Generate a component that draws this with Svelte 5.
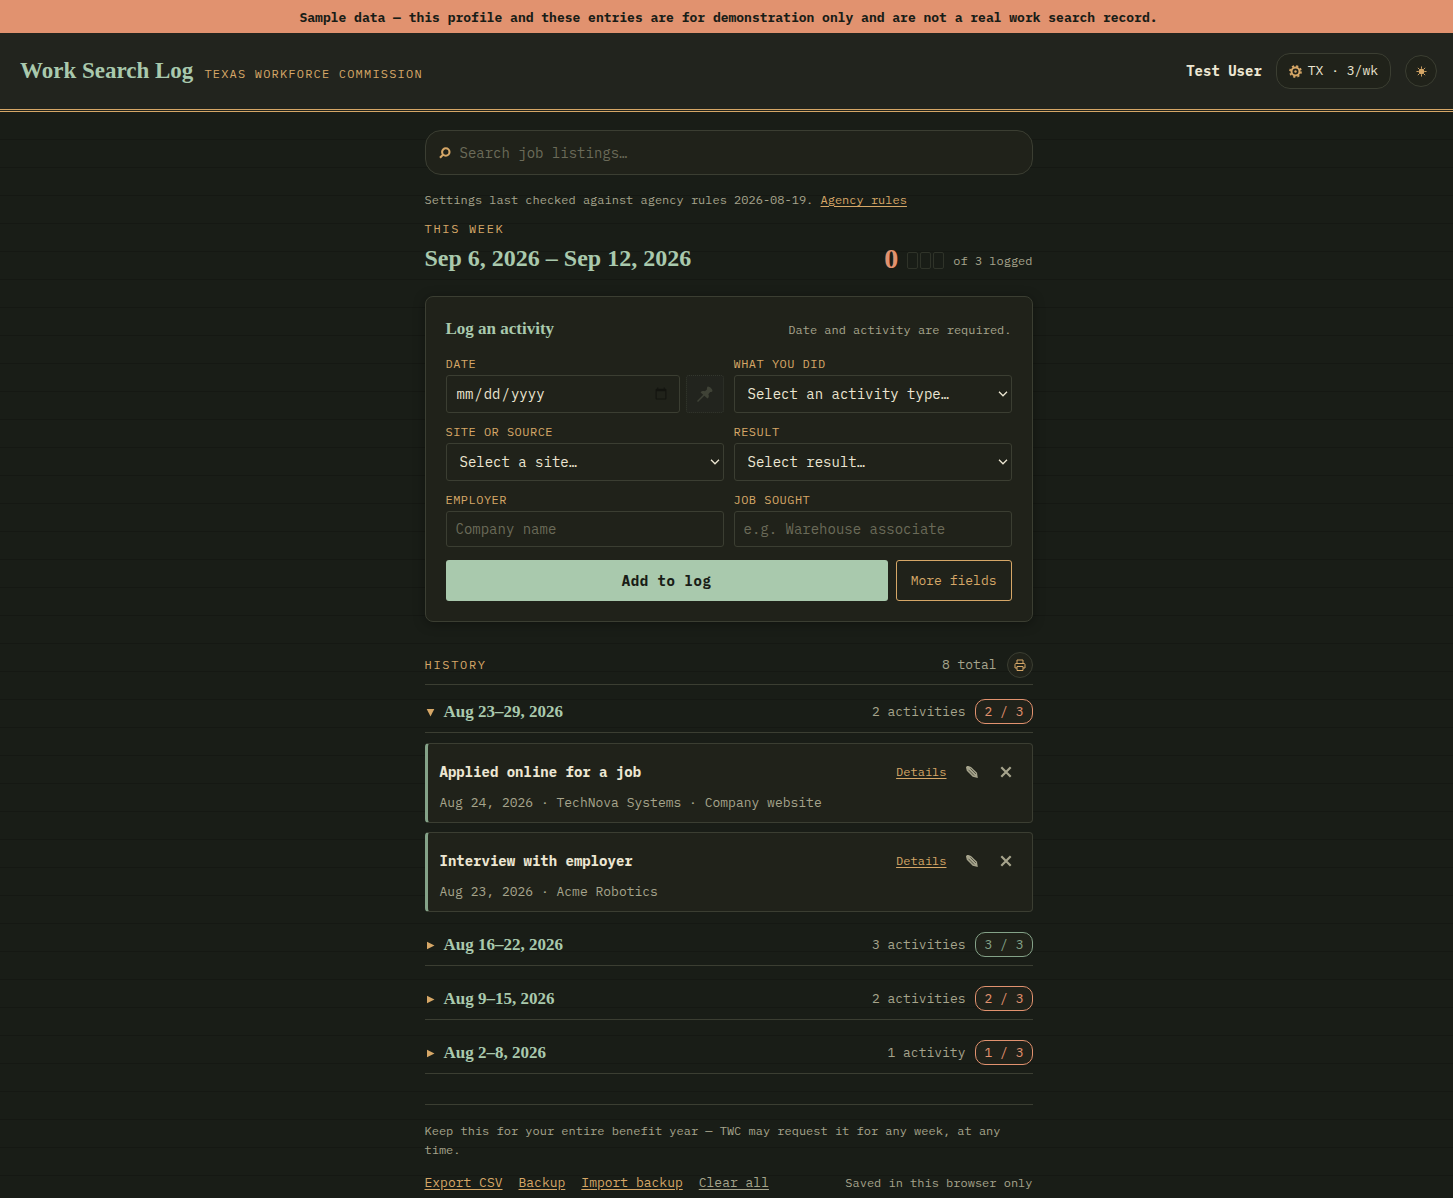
<script lang="ts">
    interface Entry {
        title: string;
        meta: string;
    }

    interface Week {
        label: string;
        count: number;
        entries: Entry[];
    }

    const goal = 3;

    const weeks: Week[] = [
        {
            label: 'Aug 23–29, 2026',
            count: 2,
            entries: [
                {
                    title: 'Applied online for a job',
                    meta: 'Aug 24, 2026 · TechNova Systems · Company website',
                },
                {
                    title: 'Interview with employer',
                    meta: 'Aug 23, 2026 · Acme Robotics',
                },
            ],
        },
        { label: 'Aug 16–22, 2026', count: 3, entries: [] },
        { label: 'Aug 9–15, 2026', count: 2, entries: [] },
        { label: 'Aug 2–8, 2026', count: 1, entries: [] },
    ];

    const total = weeks.reduce((sum, week) => sum + week.count, 0);

    let openWeek = $state('Aug 23–29, 2026');

    function toggleWeek(label: string) {
        openWeek = openWeek === label ? '' : label;
    }
</script>

<div class="page">
    <div class="banner">
        Sample data — this profile and these entries are for demonstration only
        and are not a real work search record.
    </div>

    <header class="topbar">
        <div class="brand">
            <h1>Work Search Log</h1>
            <span class="agency">Texas Workforce Commission</span>
        </div>
        <div class="account">
            <span class="user">Test User</span>
            <button class="state-pill" type="button">
                <svg width="13" height="13" viewBox="0 0 26 26" aria-hidden="true">
                    <circle cx="13" cy="13" r="8" fill="none" stroke="currentColor" stroke-width="4" />
                    <circle cx="13" cy="13" r="11" fill="none" stroke="currentColor" stroke-width="3.4" stroke-dasharray="4.32 4.32" />
                    <circle cx="13" cy="13" r="2.4" fill="currentColor" />
                </svg>
                TX · 3/wk
            </button>
            <button class="theme" type="button" aria-label="Switch theme">
                <svg width="11" height="11" viewBox="0 0 24 24" aria-hidden="true">
                    <circle cx="12" cy="12" r="6" fill="currentColor" />
                    <path
                        d="M12 1v5M12 18v5M1 12h5M18 12h5M4 4l4 4M16 16l4 4M4 20l4-4M16 8l4-4"
                        stroke="currentColor"
                        stroke-width="2"
                    />
                </svg>
            </button>
        </div>
    </header>

    <main>
        <label class="search">
            <svg width="12" height="12" viewBox="0 0 12 12" aria-hidden="true">
                <circle cx="6.8" cy="5" r="3.7" fill="none" stroke="currentColor" stroke-width="2.1" />
                <path d="M4.2 7.6L1 10.8" stroke="currentColor" stroke-width="2.1" />
            </svg>
            <input type="search" placeholder="Search job listings…" aria-label="Search job listings" />
        </label>

        <p class="checked">
            Settings last checked against agency rules 2026-08-19.
            <a href="#rules">Agency rules</a>
        </p>

        <section class="current">
            <div>
                <p class="eyebrow">This week</p>
                <h2>Sep 6, 2026 – Sep 12, 2026</h2>
            </div>
            <div class="tally">
                <span class="logged">0</span>
                <span class="boxes">
                    {#each { length: goal } as _}
                        <span class="box"></span>
                    {/each}
                </span>
                <span>of {goal} logged</span>
            </div>
        </section>

        <form class="card">
            <div class="card-head">
                <h3>Log an activity</h3>
                <span>Date and activity are required.</span>
            </div>

            <div class="fields">
                <div class="field">
                    <label for="date">Date</label>
                    <div class="date-row">
                        <input id="date" type="date" />
                        <button class="pin" type="button" aria-label="Pin this date" disabled>
                            <svg width="18" height="18" viewBox="0 0 18 18" aria-hidden="true">
                                <path
                                    d="M11.5 1.8c1.2-1.2 5.700 2.800 4.900 4.500-.6 1-1.500.5-2.200.8l-1.800 2.100c.8 1.700.5 3.400-.9 4.200L4.600 7.500C5.400 6.100 7.300 5.700 8.900 6.300l2-1.900c.1-.9-.2-1.700.6-2.600z"
                                    fill="currentColor"
                                />
                                <path d="M8.500 9.500L1.500 16.500" stroke="currentColor" stroke-width="1.5" />
                            </svg>
                        </button>
                    </div>
                </div>
                <div class="field">
                    <label for="activity">What you did</label>
                    <select id="activity">
                        <option>Select an activity type…</option>
                        <option>Applied online for a job</option>
                        <option>Interview with employer</option>
                    </select>
                </div>
                <div class="field">
                    <label for="site">Site or source</label>
                    <select id="site">
                        <option>Select a site…</option>
                        <option>Company website</option>
                    </select>
                </div>
                <div class="field">
                    <label for="result">Result</label>
                    <select id="result">
                        <option>Select result…</option>
                    </select>
                </div>
                <div class="field">
                    <label for="employer">Employer</label>
                    <input id="employer" type="text" placeholder="Company name" />
                </div>
                <div class="field">
                    <label for="job">Job sought</label>
                    <input id="job" type="text" placeholder="e.g. Warehouse associate" />
                </div>
            </div>

            <div class="actions">
                <button class="add" type="button">Add to log</button>
                <button class="more" type="button">More fields</button>
            </div>
        </form>

        <section>
            <div class="history-head">
                <h2 class="eyebrow">History</h2>
                <div class="history-tools">
                    <span>{total} total</span>
                    <button class="print" type="button" aria-label="Print history">
                        <svg width="12" height="12" viewBox="0 0 12 12" fill="none" stroke="currentColor" aria-hidden="true">
                            <path d="M3 4.500V1h6v3.500M3 9H1V5.500a1 1 0 0 1 1-1h8a1 1 0 0 1 1 1V9H9" />
                            <path d="M3 7.500h6V11.500H3z" />
                        </svg>
                    </button>
                </div>
            </div>

            <div class="weeks">
                {#each weeks as week (week.label)}
                    <div class="week">
                        <button
                            class="week-head"
                            type="button"
                            aria-expanded={openWeek === week.label}
                            onclick={() => toggleWeek(week.label)}
                        >
                            <svg
                                class="caret"
                                class:open={openWeek === week.label}
                                width="9"
                                height="9"
                                viewBox="0 0 9 9"
                                aria-hidden="true"
                            >
                                <path d="M1 .7L8.500 4.500L1 8.300z" fill="currentColor" />
                            </svg>
                            <span class="week-label">{week.label}</span>
                            <span class="week-count"
                                >{week.count}
                                {week.count === 1 ? 'activity' : 'activities'}</span
                            >
                            <span class="score" class:met={week.count >= goal}
                                >{week.count} / {goal}</span
                            >
                        </button>
                        {#if openWeek === week.label && week.entries.length}
                            <ul class="entries">
                                {#each week.entries as entry (entry.title)}
                                    <li class="entry">
                                        <div class="entry-head">
                                            <h4>{entry.title}</h4>
                                            <a href="#details">Details</a>
                                            <button type="button" aria-label="Edit entry">
                                                <svg width="14" height="14" viewBox="0 0 14 14" aria-hidden="true">
                                                    <path d="M1 2.600C1 1.500 2.200.8 3.400 1.100L6 2L12 7.800L12.800 13L7.700 11.800L1.800 5.800z" fill="currentColor" />
                                                    <path d="M3.500 4.800L9.200 10.600M5.400 3.400L11 9" stroke="#20221a" stroke-width="0.6" />
                                                </svg>
                                            </button>
                                            <button type="button" aria-label="Delete entry">
                                                <svg width="12" height="12" viewBox="0 0 12 12" aria-hidden="true">
                                                    <path d="M1.300 1.300L10.700 10.700M10.700 1.300L1.300 10.700" stroke="currentColor" stroke-width="2.200" />
                                                </svg>
                                            </button>
                                        </div>
                                        <p>{entry.meta}</p>
                                    </li>
                                {/each}
                            </ul>
                        {/if}
                    </div>
                {/each}
            </div>
        </section>

        <footer>
            <p>
                Keep this for your entire benefit year — TWC may request it for
                any week, at any time.
            </p>
            <div class="footer-row">
                <nav>
                    <a href="#export">Export CSV</a>
                    <a href="#backup">Backup</a>
                    <a href="#import">Import backup</a>
                    <a class="quiet" href="#clear">Clear all</a>
                </nav>
                <span>Saved in this browser only</span>
            </div>
        </footer>
    </main>
</div>

<style>
    :global(body) {
        margin: 0;
        background: #191d17;
    }

    .page {
        --paper: #191d17;
        --panel: #20221a;
        --bar: #22241e;
        --line: #3b3e32;
        --ink: #ece6d2;
        --muted: #a6a48c;
        --faint: #6b6b59;
        --green: #a9c9ad;
        --tan: #d6a767;
        --orange: #e1926f;
        --serif: 'Liberation Serif', serif;

        box-sizing: border-box;
        min-height: 100vh;
        color: var(--ink);
        font-family: 'IBM Plex Mono', 'Liberation Mono', monospace;
        font-size: 14px;
        line-height: 20px;
        background: repeating-linear-gradient(
            var(--paper) 0,
            var(--paper) 27px,
            #151813 27px,
            #151813 28px
        );
    }

    .page :is(input, select, button) {
        box-sizing: border-box;
        margin: 0;
        color: inherit;
        font: inherit;
    }

    h1,
    h2,
    h3,
    h4,
    p,
    ul {
        margin: 0;
        padding: 0;
    }

    h1,
    h2,
    h3 {
        color: var(--green);
        font-family: var(--serif);
        font-weight: 700;
    }

    a {
        color: var(--tan);
        text-underline-offset: 2px;
    }

    button {
        display: flex;
        align-items: center;
        justify-content: center;
        padding: 0;
        border: 0;
        background: none;
        cursor: pointer;
    }

    .banner {
        padding: 8px 16px 5px 20px;
        background: var(--orange);
        color: #191d17;
        font-size: 13px;
        font-weight: 700;
        text-align: center;
    }

    .topbar {
        display: flex;
        align-items: center;
        justify-content: space-between;
        padding: 20px 16px 20px 20px;
        border-bottom: 3px double var(--tan);
        background: var(--bar);
    }

    .brand {
        display: flex;
        align-items: baseline;
        gap: 11px;
    }

    h1 {
        font-size: 23px;
        line-height: 28px;
    }

    .agency {
        color: var(--tan);
        font-size: 12px;
        letter-spacing: 0.1em;
        text-transform: uppercase;
    }

    .account {
        display: flex;
        align-items: center;
        gap: 14px;
    }

    .user {
        font-weight: 700;
    }

    .page .state-pill {
        gap: 6px;
        height: 36px;
        padding: 0 12px;
        border: 1px solid var(--line);
        border-radius: 14px;
        background: var(--panel);
        font-size: 13px;
    }

    .state-pill svg {
        color: var(--tan);
    }

    .page .theme {
        width: 32px;
        height: 32px;
        border: 1px solid var(--line);
        border-radius: 50%;
        background: var(--panel);
        color: var(--tan);
    }

    main {
        max-width: 608px;
        margin: 0 auto;
        padding: 18px 16px 6px 20px;
    }

    .search {
        display: flex;
        align-items: center;
        gap: 9px;
        padding: 0 13px;
        border: 1px solid var(--line);
        border-radius: 16px;
        background: var(--panel);
        color: var(--tan);
    }

    .page .search input {
        flex: 1;
        height: 43px;
        padding: 0;
        border: 0;
        outline: 0;
        background: none;
        color: var(--ink);
    }

    input::placeholder {
        color: var(--faint);
        opacity: 1;
    }

    input::-webkit-calendar-picker-indicator {
        opacity: 0.4;
    }

    .checked {
        margin-top: 15px;
        color: var(--muted);
        font-size: 12px;
    }

    .current {
        display: flex;
        align-items: flex-end;
        justify-content: space-between;
        margin-top: 9px;
    }

    .page .eyebrow {
        color: var(--tan);
        font-family: inherit;
        font-size: 12px;
        font-weight: 400;
        letter-spacing: 0.14em;
        line-height: 20px;
        text-transform: uppercase;
    }

    .current h2 {
        margin-top: 3px;
        font-size: 24px;
        line-height: 32px;
    }

    .tally {
        display: flex;
        align-items: flex-end;
        gap: 9px;
        color: var(--muted);
        font-size: 12px;
        line-height: 26px;
    }

    .logged {
        color: var(--orange);
        font-family: var(--serif);
        font-size: 28px;
        font-weight: 700;
        line-height: 30px;
    }

    .boxes {
        display: flex;
        gap: 2px;
        padding-bottom: 5px;
    }

    .box {
        box-sizing: border-box;
        width: 11px;
        height: 17px;
        border: 1px solid #2f3329;
        border-radius: 2px;
    }

    .card {
        margin-top: 22px;
        padding: 20px;
        border: 1px solid var(--line);
        border-radius: 8px;
        background: var(--panel);
        box-shadow: 0 2px 12px rgba(0, 0, 0, 0.35);
    }

    .card-head {
        display: flex;
        align-items: baseline;
        justify-content: space-between;
        color: var(--muted);
        font-size: 12px;
    }

    h3 {
        font-size: 17px;
        line-height: 24px;
    }

    .fields {
        display: grid;
        grid-template-columns: 1fr 1fr;
        gap: 10px;
        margin-top: 14px;
    }

    .field label {
        display: block;
        margin-bottom: 2px;
        color: var(--tan);
        font-size: 12px;
        letter-spacing: 0.04em;
        line-height: 18px;
        text-transform: uppercase;
    }

    .page .field :is(input, select) {
        width: 100%;
        height: 38px;
        padding: 0 9px;
        border: 1px solid var(--line);
        border-radius: 3px;
        background-color: var(--panel);
        color: var(--ink);
    }

    .page .field input[type='text'] {
        height: 36px;
    }

    .page .field select {
        appearance: none;
        padding: 0 20px 0 13px;
        background-image: url("data:image/svg+xml,%3Csvg xmlns='http://www.w3.org/2000/svg' width='10' height='6' fill='none' stroke='%23ece6d2' stroke-width='1.3'%3E%3Cpath d='M1 .8l4 4 4-4'/%3E%3C/svg%3E");
        background-position: right 3px center;
        background-repeat: no-repeat;
    }

    .date-row {
        display: flex;
        gap: 6px;
    }

    .date-row input {
        flex: 1;
    }

    .page .pin {
        flex: none;
        width: 38px;
        height: 38px;
        border: 1px dotted #34382e;
        border-radius: 3px;
        background: var(--bar);
        color: #3f4236;
    }

    .actions {
        display: flex;
        gap: 8px;
        margin-top: 13px;
    }

    .page .add {
        flex: 1;
        height: 41px;
        border-radius: 3px;
        background: var(--green);
        color: #191d17;
        font-weight: 700;
        letter-spacing: 0.04em;
    }

    .page .more {
        padding: 0 14px;
        border: 1px solid var(--tan);
        border-radius: 3px;
        color: var(--tan);
        font-size: 13px;
    }

    .history-head {
        display: flex;
        align-items: center;
        justify-content: space-between;
        margin-top: 30px;
        padding-bottom: 6px;
        border-bottom: 1px solid var(--line);
    }

    .history-tools {
        display: flex;
        align-items: center;
        gap: 10px;
        color: var(--muted);
        font-size: 13px;
    }

    .page .print {
        width: 26px;
        height: 26px;
        border: 1px solid var(--line);
        border-radius: 50%;
        background: var(--panel);
        color: var(--tan);
    }

    .weeks {
        display: flex;
        flex-direction: column;
        gap: 12px;
        margin-top: 6px;
    }

    .page .week-head {
        width: 100%;
        padding: 8px 0;
        border-bottom: 1px solid var(--line);
        font-size: 13px;
        text-align: left;
    }

    .caret {
        margin: 2px 9px 0 1px;
        color: var(--tan);
    }

    .caret.open {
        transform: rotate(90deg);
    }

    .week-label {
        flex: 1;
        color: var(--green);
        font-family: var(--serif);
        font-size: 17px;
        font-weight: 700;
    }

    .week-count {
        margin-right: 10px;
        color: var(--muted);
    }

    .score {
        padding: 2px 8px 1px;
        border: 1px solid var(--orange);
        border-radius: 10px;
        background: var(--panel);
        color: var(--orange);
    }

    .score.met {
        border-color: #84a288;
        color: #84a288;
    }

    .entries {
        display: flex;
        flex-direction: column;
        gap: 9px;
        margin-top: 10px;
        list-style: none;
    }

    .entry {
        padding: 10px 12px 9px;
        border: 1px solid var(--line);
        border-left: 3px solid #84a288;
        border-radius: 4px;
        background: var(--panel);
    }

    .entry-head {
        display: flex;
        align-items: center;
        gap: 6px;
        height: 36px;
    }

    .entry h4 {
        flex: 1;
        font-size: 14px;
        font-weight: 700;
    }

    .entry a {
        margin-right: 5px;
        font-size: 12px;
    }

    .page .entry button {
        width: 28px;
        height: 28px;
        color: var(--muted);
    }

    .entry p {
        margin-top: 3px;
        color: var(--muted);
        font-size: 13px;
    }

    footer {
        margin-top: 30px;
        padding-top: 16px;
        border-top: 1px solid var(--line);
        color: var(--muted);
        font-size: 12px;
    }

    footer p {
        line-height: 19px;
    }

    .footer-row {
        display: flex;
        align-items: center;
        justify-content: space-between;
        margin-top: 14px;
    }

    nav {
        display: flex;
        gap: 16px;
        font-size: 13px;
    }

    .quiet {
        color: var(--muted);
    }
</style>
